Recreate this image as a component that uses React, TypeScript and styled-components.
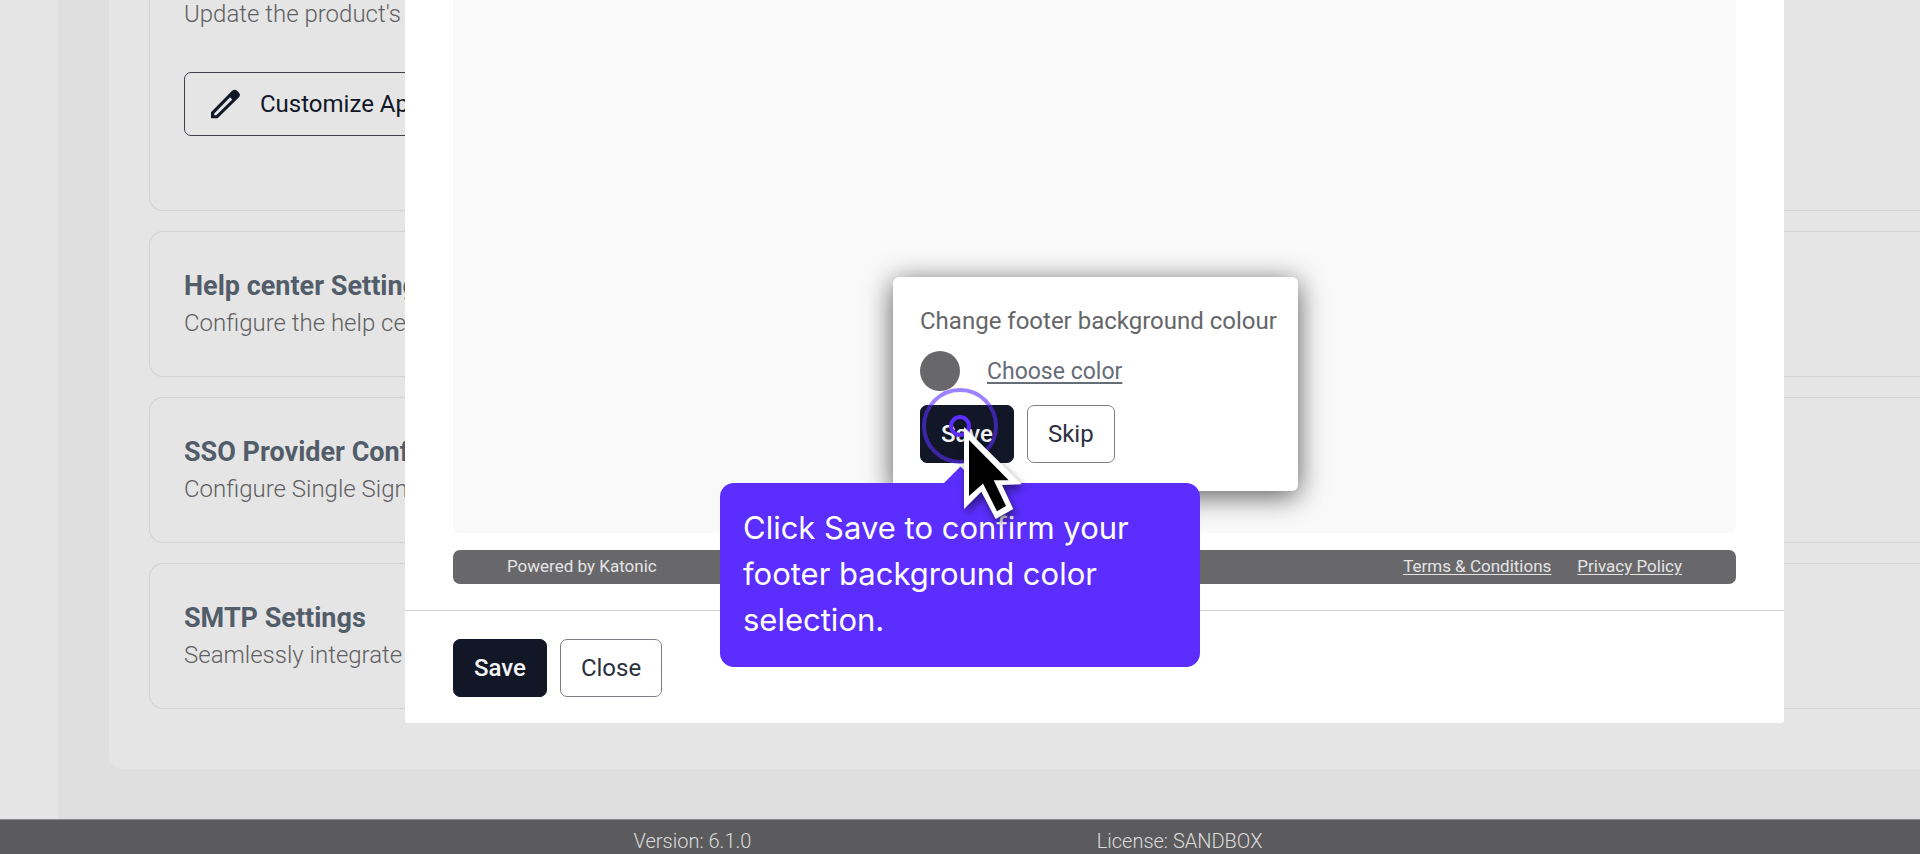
import React from "react";
import styled, { createGlobalStyle } from "styled-components";

const GlobalStyle = createGlobalStyle`
  *, *::before, *::after { box-sizing: border-box; }
  body {
    margin: 0;
    font-family: Roboto, "Liberation Sans", sans-serif;
    background: #dfdfdf;
  }
  h2, p { margin: 0; }
`;

const Page = styled.div`
  position: relative;
  display: flex;
  flex-direction: column;
  min-height: 100vh;
  overflow: hidden;
`;

const Body = styled.div`
  display: flex;
  flex: 1;
`;

const Sidebar = styled.aside`
  flex: 0 0 58px;
  background: #e5e5e5;
`;

const Main = styled.main`
  flex: 1;
  min-width: 0;
  padding: 0 0 50px 51px;
`;

const Panel = styled.div`
  display: flex;
  flex-direction: column;
  gap: 20px;
  padding: 0 0 60px 40px;
  background: #e5e5e5;
  border-bottom-left-radius: 14px;
`;

const Card = styled.section<{ $first?: boolean }>`
  padding: ${(p) => (p.$first ? "0 36px 74px 34px" : "37px 36px 39px 34px")};
  border: 1px solid #d2d2d2;
  border-right: 0;
  border-radius: 14px 0 0 14px;
  white-space: nowrap;
  ${(p) => p.$first && "border-top: 0; border-top-left-radius: 0;"}
`;

const CardTitle = styled.h2`
  margin-bottom: 6px;
  font-size: 27px;
  line-height: 34px;
  font-weight: 700;
  color: #525d69;
`;

const CardText = styled.p`
  font-size: 24px;
  line-height: 28px;
  font-weight: 300;
  color: #5f6062;
`;

const CustomizeButton = styled.button`
  display: flex;
  align-items: center;
  gap: 18px;
  height: 64px;
  margin-top: 44px;
  padding: 0 23px;
  border: 1px solid #3d404c;
  border-radius: 7px;
  background: transparent;
  font: 400 24px/28px Roboto, sans-serif;
  color: #111727;
`;

const PageFooter = styled.footer`
  display: grid;
  grid-template-columns: 36% 1fr;
  padding: 9px 0 1px 33%;
  border-top: 1px solid #8a8a8c;
  background: #5b5b5d;
  font-size: 20px;
  line-height: 24px;
  font-weight: 300;
  color: #dcdcdc;
`;

const Overlay = styled.div`
  position: absolute;
  inset: 0;
  padding: 0 136px 0 405px;
`;

const Modal = styled.div`
  border-radius: 0 0 3px 3px;
  background: #fff;
`;

const ModalBody = styled.div`
  padding: 0 48px 26px;
  border-bottom: 1px solid #d2d3d5;
`;

const Canvas = styled.div`
  position: relative;
  height: 533px;
  margin-bottom: 17px;
  border-radius: 0 0 7px 7px;
  background: #f9f9f9;
`;

const PreviewFooter = styled.div`
  display: flex;
  align-items: center;
  gap: 26px;
  height: 34px;
  padding: 0 54px 2px;
  border-radius: 7px;
  background: #68686a;
  font-size: 17px;
  line-height: 24px;
  color: #e4e4e5;
`;

const Powered = styled.span`
  margin-right: auto;
`;

const FooterLink = styled.a`
  color: inherit;
  text-underline-offset: 2px;
`;

const ModalActions = styled.div`
  display: flex;
  gap: 13px;
  padding: 28px 48px 26px;
`;

const Button = styled.button<{ $primary?: boolean }>`
  height: 58px;
  padding: 0 20px;
  border: 1px solid ${(p) => (p.$primary ? "#111727" : "#7b7f89")};
  border-radius: 7px;
  background: ${(p) => (p.$primary ? "#111727" : "#fff")};
  font: 500 24px/28px Roboto, sans-serif;
  font-weight: ${(p) => (p.$primary ? 500 : 400)};
  color: ${(p) => (p.$primary ? "#f4f4f6" : "#2b3040")};
`;

const Popover = styled.div`
  position: absolute;
  left: 440px;
  bottom: 42px;
  width: 405px;
  padding: 28px 20px 28px 27px;
  border-radius: 6px;
  background: #fff;
  box-shadow: 0 5px 28px rgba(0, 0, 0, 0.65);
  white-space: nowrap;
`;

const PopoverTitle = styled.p`
  font-size: 24px;
  line-height: 32px;
  color: #656668;
`;

const ColorRow = styled.div`
  display: flex;
  align-items: center;
  gap: 27px;
  margin: 14px 0;
`;

const Swatch = styled.span`
  width: 40px;
  height: 40px;
  border-radius: 50%;
  background: #68686a;
`;

const ColorLink = styled.a`
  padding-top: 2px;
  font-size: 23px;
  line-height: 28px;
  color: #666c78;
  text-underline-offset: 3px;
  text-decoration-thickness: 2px;
`;

const PopoverActions = styled.div`
  position: relative;
  display: flex;
  gap: 13px;
`;

const Tooltip = styled.div`
  position: absolute;
  top: 78px;
  left: -200px;
  width: 480px;
  padding: 22px 23px 24px;
  border-radius: 14px;
  background: #5b2eff;
  font: 400 31px/46px Inter, sans-serif;
  color: #fff;
  white-space: normal;
`;

const Pointer = styled.svg`
  position: absolute;
  top: -35px;
  left: -20px;
  overflow: visible;
  pointer-events: none;
`;

const CursorShape = styled.path`
  filter: drop-shadow(2px 5px 4px rgba(0, 0, 0, 0.5));
`;

const PencilIcon = () => (
  <svg width="34" height="34" viewBox="0 0 34 34" aria-hidden="true">
    <path
      fill="#111727"
      fillRule="evenodd"
      d="M3 25.2 23.8 4.1Q26.600 1.300 29.400 4.100L30.700 5.400Q33.200 7.900 30.700 10.400L9.600 31.300H3ZM6.200 28.200H8.300L24.300 12.400L22.100 10.200L6.200 26.400Z"
    />
  </svg>
);

const cards = [
  { title: "Help center Settings", text: "Configure the help center" },
  { title: "SSO Provider Configuration", text: "Configure Single Sign-On" },
  { title: "SMTP Settings", text: "Seamlessly integrate with" },
];

export default function App() {
  return (
    <Page>
      <GlobalStyle />
      <Body>
        <Sidebar />
        <Main>
          <Panel>
            <Card $first>
              <CardText>Update the product's logo</CardText>
              <CustomizeButton type="button">
                <PencilIcon />
                Customize App
              </CustomizeButton>
            </Card>
            {cards.map((card) => (
              <Card key={card.title}>
                <CardTitle>{card.title}</CardTitle>
                <CardText>{card.text}</CardText>
              </Card>
            ))}
          </Panel>
        </Main>
      </Body>
      <PageFooter>
        <span>Version: 6.1.0</span>
        <span>License: SANDBOX</span>
      </PageFooter>

      <Overlay>
        <Modal role="dialog" aria-label="Customize">
          <ModalBody>
            <Canvas>
              <Popover>
                <PopoverTitle>Change footer background colour</PopoverTitle>
                <ColorRow>
                  <Swatch />
                  <ColorLink href="#color">Choose color</ColorLink>
                </ColorRow>
                <PopoverActions>
                  <Button type="button" $primary>
                    Save
                  </Button>
                  <Button type="button">Skip</Button>
                  <Tooltip role="tooltip">
                    Click Save to confirm your footer background color selection.
                  </Tooltip>
                  <Pointer width="160" height="160" viewBox="0 0 160 160" aria-hidden="true">
                    <path d="M43 114 60.5 96.500 78 114Z" fill="#5b2eff" />
                    <circle cx="60" cy="56" r="36" fill="none" stroke="#5b2eff" strokeOpacity="0.6" strokeWidth="4" />
                    <circle cx="60" cy="56" r="9" fill="none" stroke="#5b2eff" strokeWidth="4" />
                    <CursorShape
                      d="M64 57V139L81.300 121.700 95.700 149 113.300 139 102 115 121.700 114.300Z"
                      fill="#fff"
                    />
                    <path d="M69 70V126L83 113.500 97 141.300 106 136 93.700 110.300H108.700Z" fill="#000" />
                  </Pointer>
                </PopoverActions>
              </Popover>
            </Canvas>
            <PreviewFooter>
              <Powered>Powered by Katonic</Powered>
              <FooterLink href="#terms">Terms &amp; Conditions</FooterLink>
              <FooterLink href="#privacy">Privacy Policy</FooterLink>
            </PreviewFooter>
          </ModalBody>
          <ModalActions>
            <Button type="button" $primary>
              Save
            </Button>
            <Button type="button">Close</Button>
          </ModalActions>
        </Modal>
      </Overlay>
    </Page>
  );
}
